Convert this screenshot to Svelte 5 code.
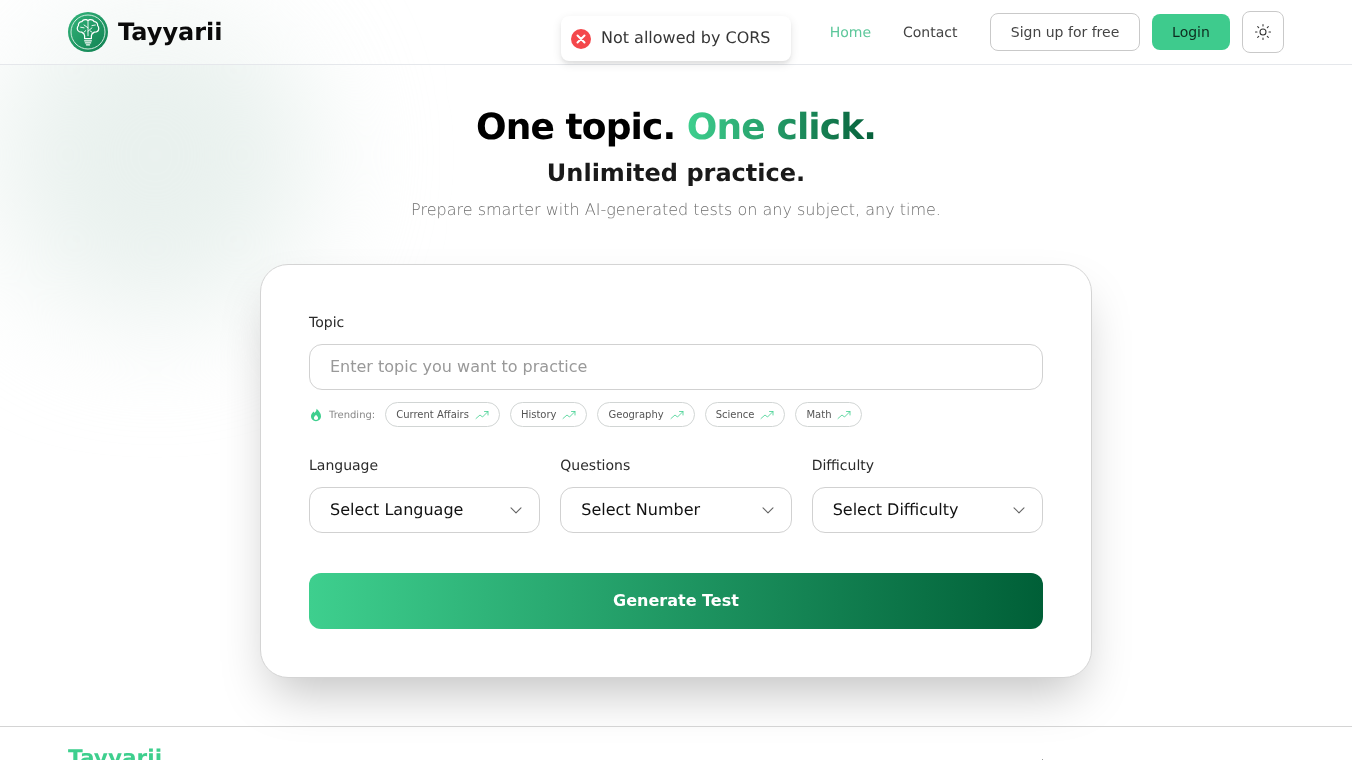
<script>
  const trending = ['Current Affairs', 'History', 'Geography', 'Science', 'Math'];
  const selects = [
    { label: 'Language', value: 'Select Language' },
    { label: 'Questions', value: 'Select Number' },
    { label: 'Difficulty', value: 'Select Difficulty' }
  ];
</script>

<div class="page">
  <div class="blob"></div>

  <header class="header">
    <div class="brand">
      <svg class="logo" viewBox="0 0 40 40" aria-hidden="true">
        <defs>
          <linearGradient id="lg" x1="0" y1="0" x2="1" y2="1">
            <stop offset="0" stop-color="#33b57b" />
            <stop offset="1" stop-color="#0f7f50" />
          </linearGradient>
        </defs>
        <circle cx="20" cy="20" r="20" fill="url(#lg)" />
        <circle cx="20" cy="20" r="17" fill="none" stroke="#e3f5ec" stroke-width="0.900" />
        <g transform="translate(20 19.500) scale(1.130) translate(-20 -21.250)" fill="none" stroke="#fff" stroke-width="1.100" stroke-linecap="round" stroke-linejoin="round">
          <path d="M17 27.500v-2.500c0-1.600-1-2.400-2.600-3.200-2.200 0-3.900-1.400-3.900-3.300 0-1 .4-1.800 1-2.400-.3-1.900 1.100-3.600 3-3.600.8-1.400 2.400-2.100 4-1.700.5.2 1 .4 1.500.7.5-.3 1-.5 1.500-.7 1.600-.4 3.200.3 4 1.700 1.900 0 3.300 1.700 3 3.600.6.6 1 1.400 1 2.400 0 1.900-1.700 3.300-3.900 3.300-1.600.8-2.600 1.600-2.600 3.200v2.500z" />
          <path d="M20 12v13M20 18l-3.500-2.500M20 21l3.500-3M13.500 17.500l3 .5M26.500 15.500l-3 .5M16.500 21.800l1.500-1.300M23.500 21.800l-1.500-1" stroke-width="0.800" />
          <path d="M17 29.500h6M17.600 31.300h4.800M18.600 33h2.800" stroke-width="1.100" />
        </g>
      </svg>
      <span class="brand-name">Tayyarii</span>
    </div>
    <nav class="nav">
      <a class="link active" href="#home">Home</a>
      <a class="link contact" href="#contact">Contact</a>
      <button class="signup">Sign up for free</button>
      <button class="login">Login</button>
      <button class="theme" aria-label="Toggle theme">
        <svg viewBox="0 0 24 24" width="18" height="18" fill="none" stroke="#333" stroke-width="1.400" stroke-linecap="round">
          <circle cx="12" cy="12" r="4" />
          <path d="M12 2v2M12 20v2M2 12h2M20 12h2M4.900 4.900l1.400 1.400M17.700 17.700l1.400 1.400M4.900 19.100l1.400-1.400M17.700 6.300l1.400-1.400" />
        </svg>
      </button>
    </nav>
  </header>

  <div class="toast">
    <svg viewBox="0 0 20 20" width="20" height="20" aria-hidden="true">
      <circle cx="10" cy="10" r="10" fill="#f4474b" />
      <path d="M6.500 6.500l7 7M13.500 6.500l-7 7" stroke="#fff" stroke-width="2" stroke-linecap="round" />
    </svg>
    <span>Not allowed by CORS</span>
  </div>

  <main class="main">
    <h1 class="title">One topic. <span class="accent">One click.</span></h1>
    <h2 class="subtitle">Unlimited practice.</h2>
    <p class="lead">Prepare smarter with AI-generated tests on any subject, any time.</p>

    <section class="card">
      <label class="label" for="topic">Topic</label>
      <input id="topic" class="input" placeholder="Enter topic you want to practice" />

      <div class="trending">
        <svg class="flame" viewBox="0 0 12 14" width="12" height="14" aria-hidden="true">
          <path fill="#3ecf8e" d="M6.500.8c.3 2-1 3-2 4.100-.3-.5-.5-1-.6-1.500C2 4.800 1 6.500 1 8.300 1 11.200 3.200 13.200 6 13.200s5-2 5-4.900C11 5.300 8.800 2.800 6.500.8z" />
          <path fill="#fff" d="M6 12c-1.200 0-2.100-.9-2.100-2 0-1 .9-1.800 2.100-3.200 1.200 1.400 2.100 2.200 2.100 3.200 0 1.100-.9 2-2.100 2z" />
        </svg>
        <span class="trending-label">Trending:</span>
        {#each trending as item}
          <button class="chip">
            {item}
            <svg viewBox="0 0 14 10" width="14" height="10" fill="none" stroke="#3ecf8e" stroke-width="0.800" stroke-linecap="round" stroke-linejoin="round" aria-hidden="true">
              <path d="M1 8.500l4-3.500 2.500 2L13 1.500M9.500 1.500H13V5" />
            </svg>
          </button>
        {/each}
      </div>

      <div class="selects">
        {#each selects as s}
          <div class="field">
            <span class="label">{s.label}</span>
            <div class="select">
              <span>{s.value}</span>
              <svg viewBox="0 0 16 16" width="16" height="16" fill="none" stroke="#666" stroke-width="1.100" stroke-linecap="round" stroke-linejoin="round" aria-hidden="true">
                <path d="M3 5.800L8 10.800l5-5" />
              </svg>
            </div>
          </div>
        {/each}
      </div>

      <button class="generate">Generate Test</button>
    </section>
  </main>

  <footer class="footer">
    <span class="footer-brand">Tayyarii</span>
    <span class="footer-tick"></span>
  </footer>
</div>

<style>
  :global(html), :global(body) {
    margin: 0;
    overflow: hidden;
    height: 760px;
    background: #fff;
  }
  .page {
    position: relative;
    height: 760px;
    overflow: hidden;
    font-family: "DejaVu Sans", sans-serif;
    color: #111;
    will-change: transform;
    text-rendering: geometricPrecision;
  }
  .blob {
    position: absolute;
    left: -5px;
    top: -10px;
    width: 320px;
    height: 330px;
    border-radius: 50%;
    background: #e9f1ee;
    filter: blur(60px);
  }
  .header {
    position: relative;
    height: 64px;
    padding: 0 68px;
    display: flex;
    align-items: center;
    justify-content: space-between;
    border-bottom: 1px solid #e5e7eb;
    background: rgba(255, 255, 255, 0.4);
  }
  .brand {
    display: flex;
    align-items: center;
    gap: 10px;
  }
  .logo {
    width: 40px;
    height: 40px;
  }
  .brand-name {
    font-size: 24px;
    font-weight: 700;
    color: #0a0a0a;
  }
  .nav {
    display: flex;
    align-items: center;
  }
  .link {
    font-size: 14px;
    color: #444;
    text-decoration: none;
    margin-right: 32px;
    padding-top: 2px;
  }
  .link.active {
    color: #5cc79a;
  }
  .link.contact {
    margin-right: 32.500px;
  }
  button {
    font-family: inherit;
    cursor: pointer;
  }
  .signup {
    width: 150px;
    height: 38px;
    background: #fff;
    border: 1px solid #c9c9c9;
    border-radius: 8px;
    font-size: 14px;
    color: #444;
  }
  .login {
    width: 78px;
    height: 36px;
    margin-left: 12px;
    background: #3ecb8d;
    border: 0;
    border-radius: 8px;
    font-size: 14px;
    color: #0d2b1e;
  }
  .theme {
    width: 42px;
    height: 42px;
    margin-left: 12px;
    padding: 0;
    background: #fff;
    border: 1px solid #c9c9c9;
    border-radius: 8px;
    display: flex;
    align-items: center;
    justify-content: center;
  }
  .toast {
    position: absolute;
    top: 16px;
    left: 561px;
    width: 230px;
    height: 45px;
    box-sizing: border-box;
    padding: 0 10px;
    display: flex;
    align-items: center;
    gap: 10px;
    background: #fff;
    border-radius: 8px;
    box-shadow: 0 3px 10px rgba(0, 0, 0, 0.1), 0 3px 3px rgba(0, 0, 0, 0.05);
    font-size: 16px;
    color: #363636;
    white-space: nowrap;
  }
  .toast span {
    padding-bottom: 2px;
  }
  .main {
    position: relative;
    display: flex;
    flex-direction: column;
    align-items: center;
  }
  .title {
    margin: 42px 0 0;
    font-size: 36px;
    line-height: 42px;
    font-weight: 700;
    letter-spacing: -0.900px;
    color: #000;
  }
  .accent {
    background: linear-gradient(90deg, #3ecf8e, #065f3a);
    -webkit-background-clip: text;
    background-clip: text;
    color: transparent;
  }
  .subtitle {
    margin: 8px 0 0;
    font-size: 24px;
    line-height: 32px;
    font-weight: 700;
    color: #1a1a1a;
  }
  .lead {
    margin: 9px 0 0;
    font-size: 16px;
    line-height: 24px;
    font-weight: 200;
    color: #6e6e6e;
  }
  .card {
    width: 832px;
    box-sizing: border-box;
    margin-top: 42px;
    padding: 48px;
    background: #fff;
    border: 1px solid #d4d4d4;
    border-radius: 28px;
    box-shadow: 0 25px 50px -12px rgba(0, 0, 0, 0.25);
  }
  .label {
    display: block;
    font-size: 14px;
    line-height: 20px;
    color: #2a2a2a;
  }
  .input {
    display: block;
    width: 100%;
    height: 46px;
    box-sizing: border-box;
    margin-top: 11px;
    padding: 0 20px 2px;
    border: 1px solid #d1d1d1;
    border-radius: 13px;
    font-family: inherit;
    font-size: 16px;
    outline: none;
    background: #fff;
  }
  .input::placeholder {
    color: #999;
  }
  .trending {
    display: flex;
    align-items: center;
    margin-top: 12px;
    height: 25px;
  }
  .flame {
    margin-left: 1px;
    margin-right: 7px;
  }
  .trending-label {
    font-size: 10px;
    color: #888;
    margin-right: 10px;
    padding-top: 2px;
  }
  .chip {
    display: flex;
    align-items: center;
    gap: 6px;
    height: 25px;
    box-sizing: border-box;
    padding: 0 10px;
    margin-right: 10px;
    background: #fff;
    border: 1px solid #d1d5d4;
    border-radius: 999px;
    font-size: 10px;
    color: #555;
    white-space: nowrap;
  }
  .selects {
    display: grid;
    grid-template-columns: repeat(3, 1fr);
    gap: 20px;
    margin-top: 29px;
  }
  .select {
    display: flex;
    align-items: center;
    justify-content: space-between;
    height: 46px;
    box-sizing: border-box;
    margin-top: 11px;
    padding: 0 15px 0 20px;
    border: 1px solid #d1d1d1;
    border-radius: 13px;
    font-size: 16px;
    color: #111;
  }
  .select span {
    padding-bottom: 2px;
  }
  .generate {
    display: block;
    width: 100%;
    height: 56px;
    margin-top: 40px;
    padding-bottom: 2px;
    border: 0;
    border-radius: 12px;
    background: linear-gradient(90deg, #3ecf8e, #005f37);
    color: #fff;
    font-size: 16px;
    font-weight: 700;
  }
  .footer {
    position: relative;
    margin-top: 48px;
    height: 120px;
    padding: 18px 68px 0;
    border-top: 1px solid #d4d4d4;
  }
  .footer-brand {
    display: block;
    font-size: 21.600px;
    line-height: 28px;
    font-weight: 700;
    color: #3ecf8e;
  }
  .footer-tick {
    position: absolute;
    left: 1042px;
    top: 32px;
    width: 1px;
    height: 8px;
    background: #999;
  }
</style>
